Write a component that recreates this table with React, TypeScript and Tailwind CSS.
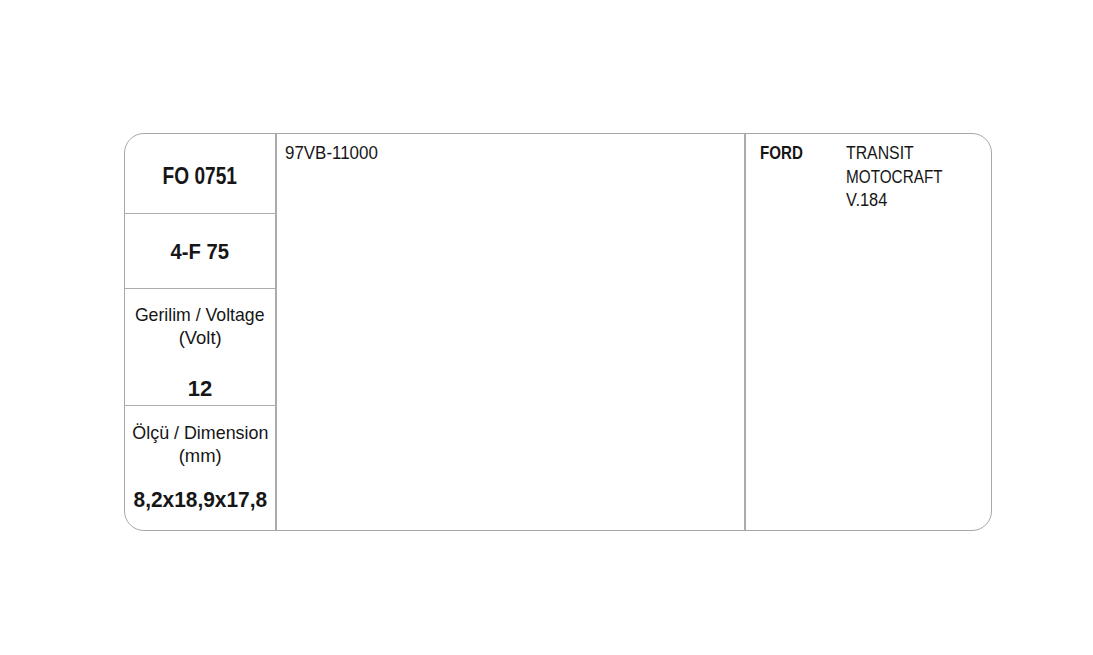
export default function App() {
  return (
    <div
      className="w-[1093px] h-[655px] bg-white pt-[133px] pl-[124px]"
      style={{ fontFamily: '"Liberation Sans", Arial, sans-serif' }}
    >
      <div className="w-[868px] h-[398px] border-[1.5px] border-[#a8a8a8] rounded-[20px] flex overflow-hidden text-[#161616]">
        <div className="w-[152px] flex flex-col border-r-[2px] border-[#ababab]">
          <div className="h-[80px] flex items-center justify-center border-b-[1.5px] border-[#acacac] pt-[5px]">
            <span className="inline-block font-bold text-[23px] scale-x-[0.83]">FO 0751</span>
          </div>
          <div className="h-[75px] flex items-center justify-center border-b-[1.5px] border-[#acacac]">
            <span className="inline-block font-bold text-[22px] scale-x-[0.92]">4-F 75</span>
          </div>
          <div className="h-[117px] flex flex-col items-center border-b-[1.5px] border-[#acacac] pt-[14px] text-[19px] leading-[23px]">
            <span className="inline-block scale-x-[0.93]">Gerilim / Voltage</span>
            <span className="inline-block scale-x-[0.97]">(Volt)</span>
            <span className="inline-block font-bold text-[22px] mt-[28px]">12</span>
          </div>
          <div className="flex-1 flex flex-col items-center pt-[15px] text-[19px] leading-[23px]">
            <span className="inline-block scale-x-[0.94]">Ölçü / Dimension</span>
            <span className="inline-block scale-x-[0.97]">(mm)</span>
            <span className="inline-block font-bold text-[22px] mt-[21px] scale-x-[0.95]">8,2x18,9x17,8</span>
          </div>
        </div>
        <div className="w-[469px] border-r-[2px] border-[#ababab] pl-[8px] pt-[8px] text-[18px] leading-[23px]">
          <span className="inline-block origin-left scale-x-[0.94]">97VB-11000</span>
        </div>
        <div className="flex-1 flex pl-[14px] pt-[8px] text-[18px] leading-[23.5px]">
          <div className="w-[86px]">
            <span className="inline-block origin-left font-bold scale-x-[0.84]">FORD</span>
          </div>
          <div className="flex flex-col items-start">
            <span className="inline-block origin-left scale-x-[0.88]">TRANSIT</span>
            <span className="inline-block origin-left scale-x-[0.85]">MOTOCRAFT</span>
            <span className="inline-block origin-left scale-x-[0.91]">V.184</span>
          </div>
        </div>
      </div>
    </div>
  );
}
